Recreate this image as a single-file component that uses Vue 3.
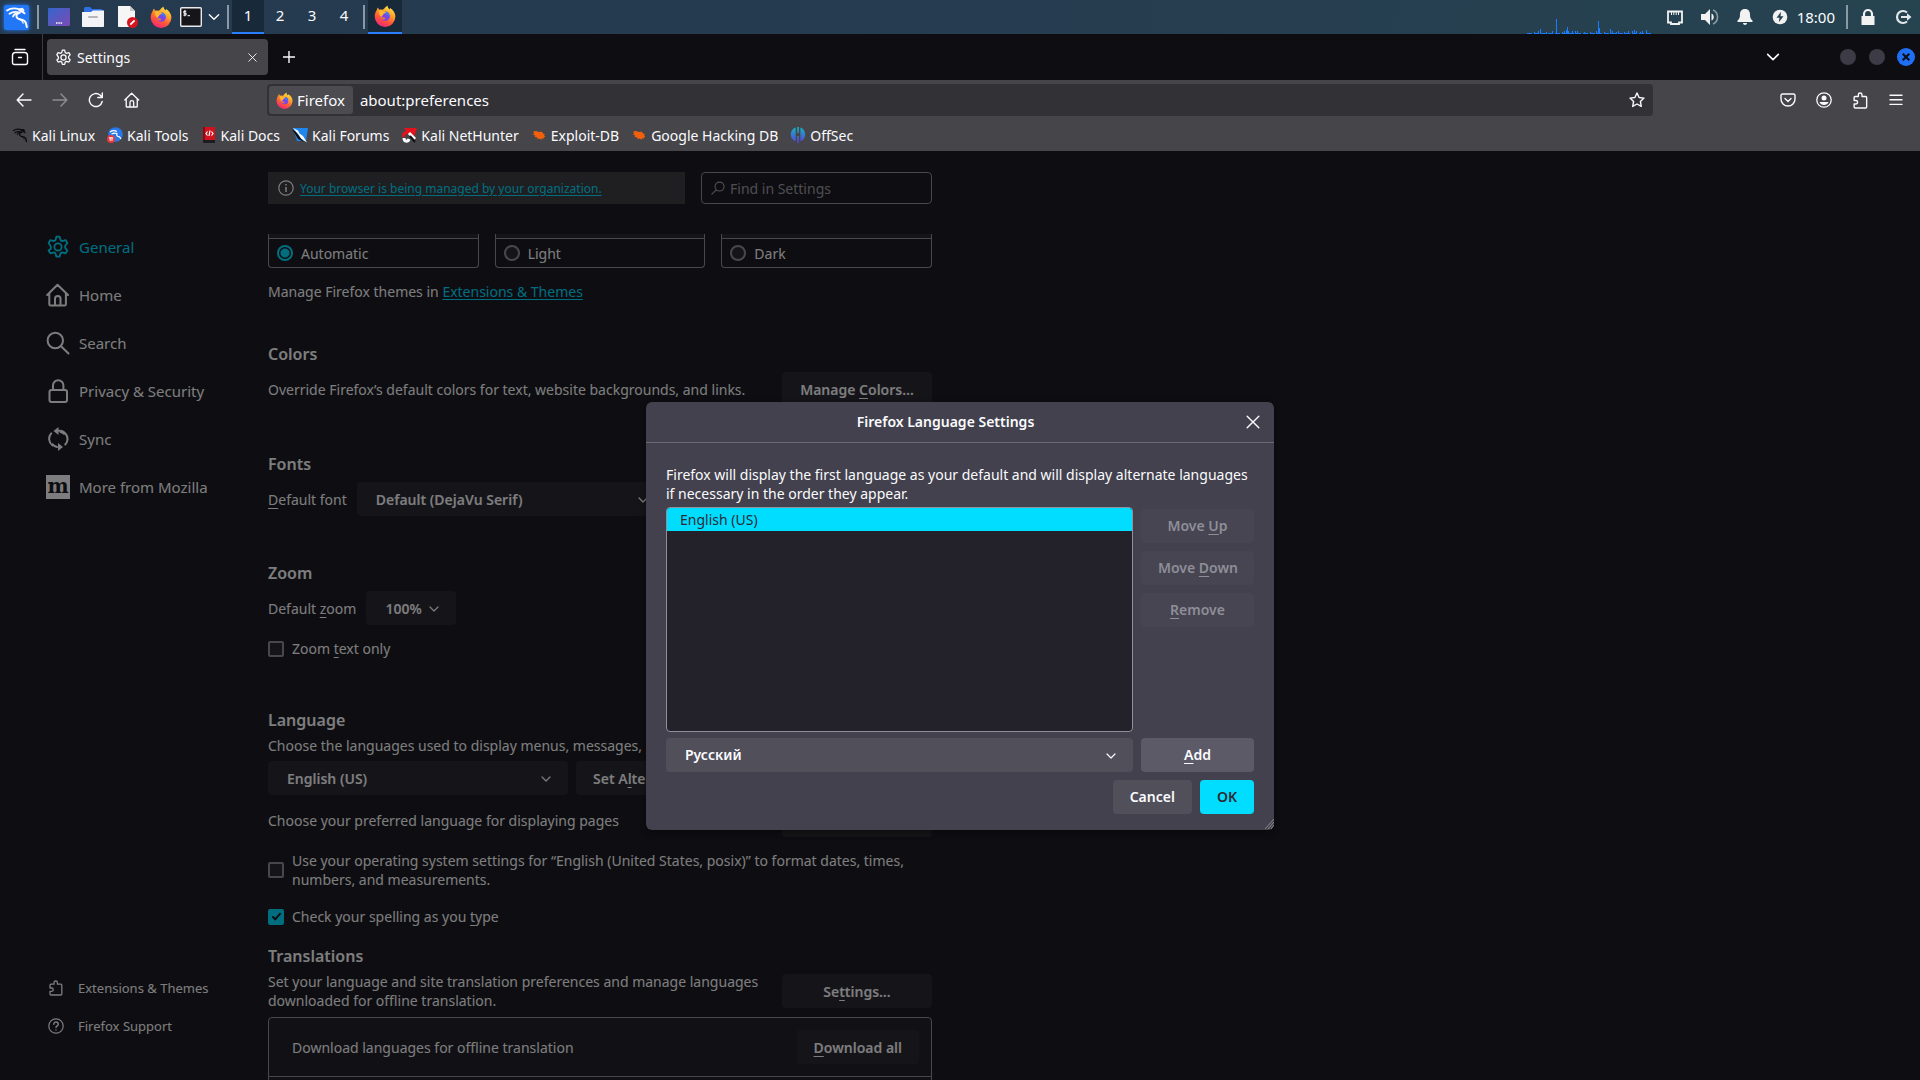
<template>
  <div class="desktop">
    <!-- Shared icon shapes -->
    <svg class="defs" aria-hidden="true">
      <defs>
        <linearGradient id="fx-body" x1="0.8" y1="0" x2="0.3" y2="1">
          <stop offset="0" stop-color="#fff04a" />
          <stop offset="0.35" stop-color="#ffa52b" />
          <stop offset="0.65" stop-color="#ff5a36" />
          <stop offset="1" stop-color="#f0237c" />
        </linearGradient>
        <linearGradient id="desk-bg" x1="0" y1="0" x2="1" y2="1">
          <stop offset="0" stop-color="#3465cc" />
          <stop offset="1" stop-color="#7b4bb4" />
        </linearGradient>
        <linearGradient id="offsec-bg" x1="0" y1="0" x2="0" y2="1">
          <stop offset="0" stop-color="#12b5c0" />
          <stop offset="1" stop-color="#5a3fd8" />
        </linearGradient>
      </defs>
      <symbol id="firefox" viewBox="0 0 22 22">
        <path fill="url(#fx-body)" d="M2.6 5.2C3 4 3.5 3.200 4.100 2.600c.2 1 .6 1.600 1.100 2.100 1-.3 2-.3 2.800 0C10 5 10.600 2.500 13.500.6c0 1.700.8 2.700 2 3.800l.6-1.500c3.500 2.200 5.300 5.300 5.300 8.700a10.300 10.300 0 0 1-20.700 0c0-2.500.7-4.600 1.900-6.400z" />
        <circle cx="11.300" cy="11.200" r="4.600" fill="#7a45e6" />
        <path fill="#3f7cf0" d="M9 7.200c2-1 4.500-.5 5.800 1 1 1.500 1 3 .3 4.300-.5-2.300-2-3.300-3.600-3.200z" />
        <path fill="#ffb52f" d="M5.200 5.300c1.600-.6 3.200-.2 4.200.9l2.600.5c-.2 1-1 1.500-2.200 1.900-.8 1.900-2 2.200-2.200 3.900-2.100-2-3.200-4.500-2.400-7.200z" />
        <path fill="#ff7139" d="M7.300 11.400c1 1.100 2.800.8 4.400 1.900-1.500 1.700-3.300 1.400-4.300.4z" />
      </symbol>
      <symbol id="dragon" viewBox="0 0 24 24">
        <g fill="none" stroke="currentColor" stroke-linecap="round">
          <path stroke-width="1.800" d="M2 5.500c4-2.800 8-2.700 12.500-1.200M4.500 8.800c3-2 6.500-2.500 10.500-1M8 11.500c.6-2 3-3.500 5.500-3.200" />
          <path stroke-width="2" d="M14 4.500c1.500 1.800 3.500 2 5.500 3.800M15.300 4.200l2-.3 1.200 1.600" />
          <path stroke-width="2" d="M13.500 8c-2.500 1.200-3 4.200-.4 5.600 2.300 1.100 6 .8 7.300 3.400.9 1.800 1 3.400 1.400 5" />
          <path stroke-width="1.300" d="M14.500 14.500c2 .6 3.200 1.800 3.700 3.600" />
        </g>
      </symbol>
      <symbol id="gear" viewBox="0 0 24 24">
        <g fill="none" stroke="currentColor" stroke-width="1.800" stroke-linejoin="round">
          <circle cx="12" cy="12" r="3.600" />
          <path d="M10.400 1h3.200l.9 3.400 1.700 1 3.400-1 1.800 2.800-2.200 2.800v2.200l2.200 2.600-1.800 2.900-3.400-1-1.700 1-.9 3.300h-3.200l-.9-3.300-1.700-1-3.400 1-1.800-2.900L4.800 13v-2.200L2.600 7.200l1.800-2.800 3.400 1 1.700-1z" transform="translate(0 .7)" />
        </g>
      </symbol>
      <symbol id="home" viewBox="0 0 24 24">
        <path fill="none" stroke="currentColor" stroke-width="2" stroke-linecap="round" stroke-linejoin="round" d="M1.200 12 11.500 1.800 22 12M3.300 10.200v11c0 .9.600 1.300 1.300 1.300h14c.8 0 1.300-.5 1.300-1.300v-11M9 22v-6.500c0-3.500 5.500-3.500 5.500 0V22" />
      </symbol>
      <symbol id="search" viewBox="0 0 24 24">
        <path fill="none" stroke="currentColor" stroke-width="2" stroke-linecap="round" d="M17 9.500a7.700 7.700 0 1 1-15.400 0 7.700 7.700 0 0 1 15.400 0zM15 15.200l7.500 7.300" />
      </symbol>
      <symbol id="lock" viewBox="0 0 24 24">
        <g fill="none" stroke="currentColor" stroke-width="2">
          <rect x="3.500" y="11" width="17.500" height="12" rx="2" />
          <path d="M7 11V6.500a5.200 5.200 0 0 1 10.400 0V11" />
        </g>
      </symbol>
      <symbol id="sync" viewBox="0 0 24 24">
        <path fill="none" stroke="currentColor" stroke-width="2" stroke-linecap="round" d="M6.500 18.500A8.300 8.300 0 0 1 5.200 6.400M12.500 3.700a8.300 8.300 0 0 1 6.800 13.800M14.500 5a8.200 8.200 0 0 1 3.500 1.800M6.300 17.200A8 8 0 0 0 11 20" />
        <path fill="currentColor" d="M12.500 0v8L7.500 4zM12 24v-8l5 4z" />
      </symbol>
      <symbol id="puzzle" viewBox="0 0 16 16">
        <path fill="none" stroke="currentColor" stroke-width="1.300" stroke-linejoin="round" d="M2 5.200c0-.7.300-1 1-1h3V2.700a1.700 1.700 0 0 1 3.400 0v1.500h3.400c.7 0 1 .4 1 1V14c0 .7-.3 1-1 1H3c-.7 0-1-.3-1-1v-2.700h1.600a1.600 1.600 0 0 0 0-3.300H2z" />
      </symbol>
      <symbol id="help" viewBox="0 0 16 16">
        <circle cx="8" cy="8" r="7.200" fill="none" stroke="currentColor" stroke-width="1.200" />
        <path fill="none" stroke="currentColor" stroke-width="1.400" stroke-linecap="round" d="M5.800 6.200c0-3 4.500-2.800 4.500 0C10.300 7.800 8 7.900 8 9.500M8 12v.1" />
      </symbol>
      <symbol id="chevron" viewBox="0 0 12 12">
        <path fill="none" stroke="currentColor" stroke-width="1.200" stroke-linecap="round" stroke-linejoin="round" d="m2 4 4 4 4-4" />
      </symbol>
      <symbol id="cross" viewBox="0 0 12 12">
        <path fill="none" stroke="currentColor" stroke-width="1.200" stroke-linecap="round" d="m1 1 10 10M11 1 1 11" />
      </symbol>
      <symbol id="bug" viewBox="0 0 16 16">
        <path fill="#f2600c" d="M2 4.500 5 4l3 1 3-.2 1 1.600 2.200 1-1.200.8 1.500 1.800-1.800.3.600 1.500-2.100-.6-1 1.600-1.500-1.200-2 .7-.3-1.700L3.500 10l.8-1.300L1.500 7l1.900-.5z" />
      </symbol>
    </svg>

    <!-- Desktop panel -->
    <header class="panel">
      <button class="kali-menu" aria-label="Applications">
        <svg width="24" height="24"><use href="#dragon" /></svg>
      </button>
      <i class="panel-sep"></i>
      <div class="launchers">
        <button aria-label="Show desktop">
          <svg width="22" height="22" viewBox="0 0 22 22">
            <rect y="2" width="22" height="18" rx="1" fill="url(#desk-bg)" />
            <path stroke="#fff" stroke-width="1.500" d="M8 17h1.500M10.300 17h1.500M12.600 17h1.500" />
          </svg>
        </button>
        <button aria-label="File manager">
          <svg width="22" height="22" viewBox="0 0 22 22">
            <path fill="#2f6fe4" d="M2 3c0-1 .5-2 1.500-2H8l2 2h9c1 0 1.500.6 1.500 1.500V9H2z" />
            <path fill="#f4f4f6" d="M0 6h9l2-1.500h11V20c0 .6-.4 1-1 1H1c-.6 0-1-.4-1-1z" />
            <path stroke="#b6b6bb" stroke-width="2" stroke-linecap="round" d="M7 11h8" />
          </svg>
        </button>
        <button aria-label="Text editor">
          <svg width="22" height="22" viewBox="0 0 22 22">
            <path fill="#f6f6f7" d="M2 0h12l5 5v16H3c-.6 0-1-.4-1-1z" />
            <path fill="#c8c8cc" d="M14 0v5h5z" />
            <circle cx="16.500" cy="16.500" r="5.500" fill="#d7141e" />
            <path stroke="#fff" stroke-width="1.800" d="m14.300 18.600 4.300-4.300" />
          </svg>
        </button>
        <button aria-label="Firefox"><svg width="22" height="22"><use href="#firefox" /></svg></button>
        <button aria-label="Terminal">
          <svg class="terminal" width="22" height="22" viewBox="0 0 22 22">
            <rect x=".7" y="1.700" width="20.600" height="18.600" rx="1" fill="#16151a" stroke="#e9e9ec" stroke-width="1.400" />
            <path fill="none" stroke="#fff" stroke-width="1" d="M6.300 5.300H3.800v1.900h2.300v1.900H3.400M4.900 4v6.300M7.500 9.700H10" />
          </svg>
        </button>
        <button class="more" aria-label="More terminals"><svg width="14" height="14"><use href="#chevron" /></svg></button>
      </div>
      <i class="panel-sep"></i>
      <nav class="workspaces">
        <button v-for="n in 4" :key="n" :class="{ active: n === workspace }" @click="workspace = n">{{ n }}</button>
      </nav>
      <i class="panel-sep"></i>
      <button class="task active" aria-label="Firefox window"><svg width="22" height="22"><use href="#firefox" /></svg></button>

      <div class="tray">
        <svg class="graph" width="128" height="16" viewBox="0 0 128 16">
          <path
            v-for="(bar, i) in load"
            :key="i"
            :d="`M${bar[0]}.5 16v-${bar[1]}`"
            stroke="#1c7cff"
          />
          <path stroke="#1c7cff" stroke-dasharray="5 2" d="M1 15.500h126" />
        </svg>
        <svg width="18" height="18" viewBox="0 0 18 18">
          <path fill="none" stroke="#f2f2f2" stroke-width="1.800" d="M2 3.500h14v11h-3V16H5v-1.500H2z" />
          <path stroke="#f2f2f2" d="M5.500 4v3M7.800 4v3M10.200 4v3M12.500 4v3" />
        </svg>
        <svg width="18" height="18" viewBox="0 0 18 18">
          <path fill="#f2f2f2" d="M0 6h4l5-5v16l-5-5H0z" />
          <path fill="#f2f2f2" d="M10.500 5.500c3 1 3 6 0 7z" />
          <path fill="none" stroke="#8a9aa3" stroke-width="1.600" d="M12 2c6 2.500 6 11.500 0 14" />
        </svg>
        <svg width="18" height="18" viewBox="0 0 18 18">
          <path fill="#f2f2f2" d="M9 1c3.800 0 5 2.500 5 5.500 0 3.300.8 4.600 2.500 6V14h-15v-1.500c1.700-1.400 2.500-2.700 2.500-6C4 3.500 5.200 1 9 1zM7 15h4c0 2.500-4 2.500-4 0z" />
        </svg>
        <svg width="18" height="18" viewBox="0 0 18 18">
          <circle cx="9" cy="9" r="7.300" fill="#f2f2f2" />
          <path fill="#243f50" d="m10 3.800-4.500 6h3l-.7 4.500 4.700-6h-3z" />
        </svg>
        <time>18:00</time>
        <i class="panel-sep"></i>
        <svg width="18" height="18" viewBox="0 0 18 18">
          <path fill="#f2f2f2" d="M2.500 8h13v9h-13z" />
          <path fill="none" stroke="#f2f2f2" stroke-width="2.200" d="M5 9V6a4 4 0 0 1 8 0v3" />
        </svg>
        <svg width="18" height="18" viewBox="0 0 18 18">
          <path fill="none" stroke="#e4e8ea" stroke-width="2.200" d="M13 4.500a6 6 0 1 0 0 9" />
          <path fill="#e4e8ea" d="M7 8h6V5.200L17.500 9 13 12.800V10H7z" />
        </svg>
      </div>
    </header>

    <!-- Tab strip -->
    <div class="tabs">
      <button class="icon-btn view" aria-label="Firefox View">
        <svg width="18" height="18" viewBox="0 0 18 18" fill="none" stroke="currentColor" stroke-width="1.400" stroke-linecap="round">
          <path d="M4 1.500h10" />
          <path d="M1.500 7.500c0-2 1-3 3-3h9c2 0 3 1 3 3v7c0 1.300-.7 2-2 2h-11c-1.300 0-2-.7-2-2z" />
          <path d="M7.500 9.500h3" />
        </svg>
      </button>
      <div class="tab">
        <svg width="17" height="17"><use href="#gear" /></svg>
        <span>Settings</span>
        <button class="tab-close" aria-label="Close tab"><svg width="9" height="9"><use href="#cross" /></svg></button>
      </div>
      <button class="icon-btn" aria-label="New tab">
        <svg width="14" height="14" viewBox="0 0 14 14" stroke="currentColor" stroke-width="1.400"><path d="M7 1v12M1 7h12" /></svg>
      </button>
      <div class="window-controls">
        <button class="icon-btn list" aria-label="List all tabs"><svg width="16" height="16"><use href="#chevron" /></svg></button>
        <button class="dot" aria-label="Minimize"></button>
        <button class="dot" aria-label="Maximize"></button>
        <button class="dot close" aria-label="Close"><svg width="8" height="8" viewBox="0 0 8 8" stroke="currentColor" stroke-width="2"><path d="m.7.700 6.600 6.600M7.300.7.700 7.300" /></svg></button>
      </div>
    </div>

    <!-- Navigation bar -->
    <div class="navbar">
      <div class="nav-buttons">
        <button class="icon-btn" aria-label="Back">
          <svg width="16" height="16" viewBox="0 0 16 16" class="line"><path d="M15 8H1.500M7 2 1.200 8 7 14" /></svg>
        </button>
        <button class="icon-btn faded" aria-label="Forward">
          <svg width="16" height="16" viewBox="0 0 16 16" class="line"><path d="M1 8h13.500M9 2l5.800 6L9 14" /></svg>
        </button>
        <button class="icon-btn" aria-label="Reload">
          <svg width="16" height="16" viewBox="0 0 16 16" class="line"><path d="M14.200 9.500A6.500 6.500 0 1 1 12 3l2 2M14.300 1v4.500H9.800" /></svg>
        </button>
        <button class="icon-btn" aria-label="Home"><svg width="16" height="16"><use href="#home" /></svg></button>
      </div>
      <div class="urlbar">
        <button class="identity"><svg width="17" height="17"><use href="#firefox" /></svg>Firefox</button>
        <input v-model="url" type="text" aria-label="Address">
        <button class="icon-btn" aria-label="Bookmark this page">
          <svg width="16" height="16" viewBox="0 0 16 16" class="line"><path d="m8 1 2.100 4.500 4.900.6-3.600 3.400.9 4.900L8 12l-4.300 2.400.9-4.900L1 6.100l4.900-.6z" /></svg>
        </button>
      </div>
      <div class="nav-tools">
        <button class="icon-btn" aria-label="Pocket">
          <svg width="16" height="16" viewBox="0 0 16 16" class="line"><path d="M2.500 2h11c.8 0 1.500.6 1.500 1.500V7a7 7 0 0 1-14 0V3.500C1 2.600 1.700 2 2.500 2zM5 6.500l3 3 3-3" /></svg>
        </button>
        <button class="icon-btn" aria-label="Account">
          <svg width="16" height="16" viewBox="0 0 16 16"><circle cx="8" cy="8" r="7.200" fill="none" stroke="currentColor" stroke-width="1.300" /><circle cx="8" cy="6" r="2.500" fill="currentColor" /><path fill="currentColor" d="M3.500 10h9c-1 4-8 4-9 0z" /></svg>
        </button>
        <button class="icon-btn" aria-label="Extensions"><svg width="17" height="17"><use href="#puzzle" /></svg></button>
        <button class="icon-btn" aria-label="Menu">
          <svg width="16" height="16" viewBox="0 0 16 16" class="line"><path d="M2 3.200h12M2 7.800h12M2 12.400h12" /></svg>
        </button>
      </div>
    </div>

    <!-- Bookmarks -->
    <nav class="bookmarks">
      <a href="#"><svg class="dark" width="16" height="16"><use href="#dragon" /></svg>Kali Linux</a>
      <a href="#">
        <svg width="16" height="16" viewBox="0 0 16 16">
          <circle cx="8.500" cy="7.500" r="7.300" fill="#2878ea" />
          <path fill="none" stroke="#fff" stroke-width="1.200" d="M3 5c3-2 5-1.500 7-.5M4.500 7c2-1 4-1 5.500-.5-1 2 .5 3 2.500 3.300l1.500 2" />
          <circle cx="4" cy="12" r="4" fill="#e53939" />
          <path fill="none" stroke="#fff" d="M1.800 10.800h4.400M3.200 10.800v3M5 10.800v3" />
        </svg>Kali Tools
      </a>
      <a href="#">
        <svg width="16" height="16" viewBox="0 0 16 16">
          <path fill="#d0121f" d="M2 0h12v13H2z" />
          <path fill="#8a0a14" d="M2 0h2v13H2z" />
          <path fill="#1b1b20" d="M2 13h12v3H3c-.7 0-1-.4-1-1z" />
          <path fill="none" stroke="#fff" stroke-width="1.200" d="M6.500 4.500 5 6.500l1.500 2M10.500 4.500l1.500 2-1.500 2M9 3.500 8 9" />
        </svg>Kali Docs
      </a>
      <a href="#">
        <svg width="16" height="16" viewBox="0 0 16 16">
          <path fill="#1e86ee" d="M1 1h15l-2 13H5z" />
          <path fill="#111" d="m0 2 4 3 8 10-6-3z" />
          <path fill="#fff" d="m1 1 5 2.500 1.500 3L11 9l4 6.500-6-4-2.500-4z" />
        </svg>Kali Forums
      </a>
      <a href="#">
        <svg width="16" height="16" viewBox="0 0 16 16">
          <path fill="#e5121b" d="M3 1h13l-4 12z" />
          <path fill="none" stroke="#e5121b" stroke-width="3" d="M2 10c1-6 6-6 8-2" />
          <path fill="none" stroke="#fff" stroke-width="3" d="M3 11c0 4 4 4 5 1M8 6l6 6" />
          <path stroke="#111" stroke-width="2" d="m9 9 5 6" />
        </svg>Kali NetHunter
      </a>
      <a href="#"><svg width="16" height="16"><use href="#bug" /></svg>Exploit-DB</a>
      <a href="#"><svg width="16" height="16"><use href="#bug" /></svg>Google Hacking DB</a>
      <a href="#">
        <svg width="16" height="16" viewBox="0 0 16 16">
          <path fill="url(#offsec-bg)" d="M7.200 9h1.700v7H7.200zM7.200 0h1.700v6H7.200zM5.700.5v13.800C-1.700 12 .1 2 5.700.5zM10.400.5c5.600 1.500 7.400 11.500 0 13.800z" />
        </svg>OffSec
      </a>
    </nav>

    <!-- Preferences page -->
    <div class="page">
      <aside class="sidebar">
        <ul class="categories">
          <li v-for="item in categories" :key="item.label">
            <a href="#" :class="{ selected: item.icon === 'gear' }">
              <svg v-if="item.icon" width="24" height="24"><use :href="'#' + item.icon" /></svg>
              <span v-else class="moz" aria-hidden="true">m</span>
              {{ item.label }}
            </a>
          </li>
        </ul>
        <ul class="footer-links">
          <li><a href="#"><svg width="16" height="16"><use href="#puzzle" /></svg>Extensions &amp; Themes</a></li>
          <li><a href="#"><svg width="16" height="16"><use href="#help" /></svg>Firefox Support</a></li>
        </ul>
      </aside>

      <main class="content">
        <div class="sticky">
          <div class="policy">
            <svg width="16" height="16" viewBox="0 0 16 16"><circle cx="8" cy="8" r="7.200" fill="none" stroke="currentColor" stroke-width="1.200" /><path stroke="currentColor" stroke-width="1.500" d="M8 7v5M8 4v1.600" /></svg>
            <a href="#">Your browser is being managed by your organization.</a>
          </div>
          <label class="find">
            <svg width="14" height="14"><use href="#search" /></svg>
            <input type="search" placeholder="Find in Settings" aria-label="Find in Settings">
          </label>
        </div>

        <div class="scroll">
          <div class="themes">
            <label v-for="t in ['Automatic', 'Light', 'Dark']" :key="t" class="theme">
              <span class="preview"></span>
              <span class="theme-name"><input v-model="theme" type="radio" name="theme" :value="t">{{ t }}</span>
            </label>
          </div>
          <p class="themes-link">Manage Firefox themes in <a href="#">Extensions &amp; Themes</a></p>

          <section class="colors">
            <h2>Colors</h2>
            <div class="row">
              <span>Override Firefox’s default colors for text, website backgrounds, and links.</span>
              <button class="btn side">Manage <u>C</u>olors…</button>
            </div>
          </section>

          <section class="fonts">
            <h2>Fonts</h2>
            <div class="field">
              <label for="font"><u>D</u>efault font</label>
              <div class="select font-select">
                <select id="font"><option>Default (DejaVu Serif)</option></select>
                <svg width="12" height="12"><use href="#chevron" /></svg>
              </div>
            </div>
          </section>

          <section class="zoom">
            <h2>Zoom</h2>
            <div class="field">
              <label for="zoom">Default <u>z</u>oom</label>
              <div class="select zoom-select">
                <select id="zoom"><option>100%</option></select>
                <svg width="12" height="12"><use href="#chevron" /></svg>
              </div>
            </div>
            <label class="check"><input type="checkbox"><span>Zoom <u>t</u>ext only</span></label>
          </section>

          <section class="language">
            <h2>Language</h2>
            <label class="block" for="lang">Choose the languages used to display menus, messages, and notifications from Firefox.</label>
            <div class="lang-row">
              <div class="select lang-select">
                <select id="lang"><option>English (US)</option></select>
                <svg width="12" height="12"><use href="#chevron" /></svg>
              </div>
              <button class="btn">Set A<u>l</u>ternatives…</button>
            </div>
            <div class="row preferred">
              <span>Choose your preferred language for displaying pages</span>
              <button class="btn side">Ch<u>o</u>ose…</button>
            </div>
            <label class="check locale"><input type="checkbox"><span>Use your operating system settings for “English (United States, posix)” to format dates, times, numbers, and measurements.</span></label>
            <label class="check"><input type="checkbox" checked><span>Check your spelling as you <u>t</u>ype</span></label>
          </section>

          <section class="translations">
            <h2>Translations</h2>
            <div class="row">
              <span class="wrap">Set your language and site translation preferences and manage languages downloaded for offline translation.</span>
              <button class="btn side">Se<u>t</u>tings…</button>
            </div>
            <div class="download-list">
              <div class="download-head">
                <span>Download languages for offline translation</span>
                <button class="btn"><u>D</u>ownload all</button>
              </div>
              <div class="download-body"></div>
            </div>
          </section>
        </div>
      </main>

      <!-- Language dialog -->
      <div class="overlay">
        <div class="dialog" role="dialog" aria-labelledby="dialog-title">
          <div class="dialog-head">
            <h1 id="dialog-title">Firefox Language Settings</h1>
            <button class="dialog-close" aria-label="Close"><svg width="14" height="14"><use href="#cross" /></svg></button>
          </div>
          <div class="dialog-body">
            <p>Firefox will display the first language as your default and will display alternate languages if necessary in the order they appear.</p>
            <div class="dialog-grid">
              <ul class="lang-list" role="listbox">
                <li role="option" aria-selected="true">English (US)</li>
              </ul>
              <div class="order-buttons">
                <button class="btn" disabled>Move <u>U</u>p</button>
                <button class="btn" disabled>Move <u>D</u>own</button>
                <button class="btn" disabled><u>R</u>emove</button>
              </div>
              <div class="select">
                <select v-model="toAdd" aria-label="Language to add"><option>Русский</option></select>
                <svg width="12" height="12"><use href="#chevron" /></svg>
              </div>
              <button class="btn hover"><u>A</u>dd</button>
            </div>
            <div class="dialog-actions">
              <button class="btn">Cancel</button>
              <button class="btn primary">OK</button>
            </div>
          </div>
          <svg class="resizer" width="10" height="12" viewBox="0 0 10 12"><path stroke="#a0a0a8" stroke-width=".8" d="m1 11 9-10M4 11l6-7M7 11l3-4" /></svg>
        </div>
      </div>
    </div>
  </div>
</template>

<script setup>
import { ref } from 'vue'

const workspace = ref(1)
const url = ref('about:preferences')
const theme = ref('Automatic')
const toAdd = ref('Русский')

const categories = [
  { icon: 'gear', label: 'General' },
  { icon: 'home', label: 'Home' },
  { icon: 'search', label: 'Search' },
  { icon: 'lock', label: 'Privacy & Security' },
  { icon: 'sync', label: 'Sync' },
  { icon: null, label: 'More from Mozilla' }
]

// CPU graph: x position and height of each spike
const load = [
  [8, 2], [12, 3], [14, 5], [20, 2], [26, 3], [30, 15], [36, 2], [38, 3], [40, 4], [41, 7], [42, 3],
  [46, 3], [49, 3], [51, 3], [58, 2], [64, 2], [70, 3], [72, 13], [73, 6], [78, 2], [84, 5], [86, 3],
  [90, 2], [92, 3], [98, 2], [102, 3], [106, 3], [108, 4], [110, 3], [114, 2], [116, 3], [120, 4]
]
</script>

<style>
body {
  background: #1c1b22;
}
</style>

<style scoped>
.desktop {
  display: flex;
  flex-direction: column;
  height: 100vh;
  overflow: hidden;
  font: 14px/19px "Noto Sans", sans-serif;
  color: #fbfbfe;
}

.desktop *,
.desktop *::before {
  box-sizing: border-box;
}

.defs {
  position: absolute;
  width: 0;
  height: 0;
}

svg {
  flex: none;
}

button,
input,
select {
  font: inherit;
  color: inherit;
  margin: 0;
  padding: 0;
  border: 0;
  background: none;
}

ul {
  list-style: none;
  margin: 0;
  padding: 0;
}

h1,
h2,
p {
  margin: 0;
}

a {
  color: inherit;
  text-decoration: none;
}

u {
  text-underline-offset: 3px;
  text-decoration-thickness: 1px;
}

.line {
  fill: none;
  stroke: currentColor;
  stroke-width: 1.4;
  stroke-linecap: round;
  stroke-linejoin: round;
}

/* Desktop panel */
.panel {
  display: flex;
  align-items: center;
  flex: none;
  height: 34px;
  padding: 0 8px 0 4px;
  background: linear-gradient(100deg, #253a4e, #263c50 50%, #264350);
  font-size: 15px;
}

.panel button {
  display: flex;
  align-items: center;
  justify-content: center;
}

.kali-menu {
  width: 25px;
  height: 25px;
  margin-right: 8px;
  background: #2177f5;
  border-radius: 2px;
  box-shadow: 0 0 4px #2177f5;
}

.panel-sep {
  width: 2px;
  height: 24px;
  background: #8b99a3;
}

.launchers {
  display: flex;
  gap: 12px;
  padding: 0 6px 0 9px;
}

.launchers .terminal {
  margin-left: -4px;
}

.launchers .more {
  width: 14px;
  margin-left: -7px;
}

.workspaces {
  display: flex;
  height: 100%;
  padding: 0 3px;
}

.workspaces button {
  width: 32px;
  padding-bottom: 2px;
  border-bottom: 2px solid transparent;
}

.panel .active {
  background: #18293a;
  border-bottom: 2px solid #2b7fff;
}

.task {
  width: 34px;
  height: 100%;
  margin-left: 3px;
}

.tray {
  display: flex;
  align-items: center;
  gap: 17px;
  height: 100%;
  margin-left: auto;
}

.tray .graph {
  align-self: flex-end;
  margin-right: -5px;
}

.tray time {
  margin: 0 -6px 0 -9px;
}

.tray .panel-sep {
  margin-right: -6px;
}

/* Tab strip */
.tabs {
  display: flex;
  align-items: center;
  flex: none;
  height: 46px;
  background: #0d0d12;
}

.icon-btn {
  display: flex;
  align-items: center;
  justify-content: center;
  width: 36px;
  height: 32px;
}

.view {
  width: 43px;
  height: 100%;
  padding-right: 2px;
  border-right: 1px solid #3a3a40;
}

.tab {
  display: flex;
  align-items: center;
  gap: 5px;
  width: 221px;
  height: 36px;
  margin: 0 3px 0 4px;
  padding: 0 7px 0 8px;
  background: #45454a;
  border-radius: 4px;
}

.tab-close {
  display: flex;
  align-items: center;
  justify-content: center;
  width: 18px;
  height: 18px;
  margin-left: auto;
}

.window-controls {
  display: flex;
  align-items: center;
  gap: 13px;
  margin-left: auto;
  padding-right: 5px;
}

.window-controls .list {
  margin-right: 36px;
}

.dot {
  width: 16px;
  height: 16px;
  border-radius: 50%;
  background: #3c3b46;
}

.dot.close {
  display: flex;
  align-items: center;
  justify-content: center;
  width: 18px;
  height: 18px;
  margin-left: -1px;
  background: #1f6ff5;
  color: #0d0d12;
}

/* Navigation bar */
.navbar {
  display: flex;
  align-items: center;
  justify-content: space-between;
  flex: none;
  height: 40px;
  padding: 0 6px;
  background: #45454a;
}

.nav-buttons,
.nav-tools {
  display: flex;
  width: 144px;
}

.faded {
  opacity: 0.4;
}

.urlbar {
  display: flex;
  align-items: center;
  flex: 1;
  height: 32px;
  margin: 0 117px;
  padding: 0 2px;
  background: #313136;
  border-radius: 4px;
  font-size: 15px;
}

.urlbar input {
  flex: 1;
  min-width: 0;
  height: 28px;
  outline: 0;
}

.urlbar .icon-btn {
  width: 28px;
}

.identity {
  display: flex;
  align-items: center;
  gap: 4px;
  height: 28px;
  margin-right: 7px;
  padding: 0 8px 0 7px;
  background: #4b4b50;
  border-radius: 3px;
}

.bookmarks {
  display: flex;
  gap: 12px;
  flex: none;
  height: 31px;
  padding: 5px 12px 0;
  background: #45454a;
}

.bookmarks a {
  display: flex;
  align-items: center;
  gap: 4px;
  height: 20px;
}

.bookmarks .dark {
  color: #0c0c0f;
}

/* Preferences page */
.page {
  position: relative;
  display: flex;
  flex: 1;
  min-height: 0;
  background: #1c1b22;
  overflow: hidden;
}

.sidebar {
  display: flex;
  flex-direction: column;
  justify-content: space-between;
  width: 268px;
  padding: 72px 0 35px 46px;
}

.categories a {
  display: flex;
  align-items: center;
  gap: 9px;
  height: 48px;
  font-size: 15px;
}

.categories .selected {
  color: #00ddff;
}

.moz {
  width: 24px;
  height: 24px;
  background: #fbfbfe;
  color: #1c1b22;
  font: 700 20px/22px "DejaVu Serif", serif;
  text-align: center;
}

.footer-links a {
  display: flex;
  align-items: center;
  gap: 14px;
  height: 38px;
  padding-left: 2px;
  font-size: 13px;
}

.content {
  display: flex;
  flex-direction: column;
  width: 664px;
}

.content a {
  color: #00ddff;
  text-decoration: underline;
  text-underline-offset: 2px;
}

.sticky {
  display: flex;
  gap: 16px;
  flex: none;
  height: 83px;
  padding-top: 21px;
}

.policy {
  display: flex;
  align-items: center;
  gap: 6px;
  flex: 1;
  height: 32px;
  padding-left: 10px;
  background: #3e3e42;
  font-size: 12px;
}

.find {
  display: flex;
  align-items: center;
  gap: 5px;
  width: 231px;
  height: 32px;
  padding: 0 9px;
  border: 1px solid #8f8f9d;
  border-radius: 4px;
  color: #9d9da4;
}

.find svg {
  transform: scaleX(-1);
}

.find input {
  flex: 1;
  min-width: 0;
  outline: 0;
}

.find input::placeholder {
  color: #9d9da4;
  opacity: 1;
}

.scroll {
  flex: 1;
  min-height: 0;
  overflow: hidden;
}

.themes {
  display: grid;
  grid-template-columns: repeat(3, 1fr);
  gap: 16px;
}

.theme {
  border: 1px solid #8f8f9d;
  border-top: 0;
  border-radius: 0 0 4px 4px;
}

.preview {
  display: block;
  height: 5px;
  background: #2b2a33;
  border-bottom: 1px solid #8f8f9d;
}

.theme-name {
  display: flex;
  align-items: center;
  gap: 8px;
  height: 28px;
  padding-left: 8px;
}

input[type="radio"] {
  appearance: none;
  width: 16px;
  height: 16px;
  border: 2px solid #8f8f9d;
  border-radius: 50%;
  background: #2b2a33;
}

input[type="radio"]:checked {
  border-color: #00ddff;
  background: radial-gradient(circle, #00ddff 4px, #1c1b22 5px);
}

.themes-link {
  margin-top: 14px;
}

h2 {
  font-size: 16px;
  line-height: 22px;
  font-weight: 600;
}

.row {
  display: flex;
  align-items: center;
  justify-content: space-between;
  min-height: 34px;
}

.field {
  display: flex;
  align-items: center;
  gap: 10px;
}

.btn {
  height: 34px;
  padding: 0 17px;
  background: #2b2a33;
  border-radius: 4px;
  font-weight: 600;
  white-space: nowrap;
}

.btn.side {
  width: 150px;
}

.select {
  position: relative;
  display: flex;
}

.select select {
  appearance: none;
  width: 100%;
  height: 34px;
  padding: 0 36px 0 19px;
  background: #2b2a33;
  border-radius: 4px;
  font-weight: 600;
}

.select svg {
  position: absolute;
  right: 16px;
  top: 12px;
  pointer-events: none;
}

.check {
  display: flex;
  align-items: center;
  gap: 8px;
}

input[type="checkbox"] {
  appearance: none;
  flex: none;
  width: 16px;
  height: 16px;
  border: 2px solid #8f8f9d;
  border-radius: 2px;
  background: #2b2a33;
}

input[type="checkbox"]:checked {
  position: relative;
  border-color: #00ddff;
  background: #00ddff;
}

input[type="checkbox"]:checked::before {
  content: "";
  position: absolute;
  left: 4px;
  top: 0;
  width: 5px;
  height: 9px;
  border: solid #1c1b22;
  border-width: 0 2px 2px 0;
  transform: rotate(42deg);
}

.colors {
  margin-top: 42px;
}

.colors .row {
  margin-top: 7px;
}

.fonts {
  margin-top: 47px;
}

.fonts .field,
.zoom .field {
  margin-top: 7px;
}

.font-select {
  width: 308px;
}

.zoom {
  margin-top: 46px;
}

.zoom-select {
  width: 90px;
}

.zoom-select select {
  padding-right: 16px;
}

.zoom .check {
  margin-top: 14px;
}

.language {
  margin-top: 51px;
}

.language .block {
  display: block;
  margin: 5px 0 6px;
  white-space: nowrap;
}

.lang-row {
  display: flex;
  gap: 8px;
}

.lang-select {
  width: 300px;
}

.preferred {
  margin-top: 8px;
}

.locale {
  margin: 14px 0 18px;
}

.translations {
  margin-top: 19px;
}

.translations .row {
  margin-top: 5px;
  min-height: 38px;
}

.translations .wrap {
  width: 500px;
}

.download-list {
  height: 200px;
  margin-top: 7px;
  border: 1px solid #8f8f9d;
  border-radius: 4px;
  background: #23222b;
}

.download-head {
  display: flex;
  align-items: center;
  justify-content: space-between;
  height: 59px;
  padding: 0 12px 0 23px;
  border-bottom: 1px solid #8f8f9d;
}

/* Language dialog */
.overlay {
  position: absolute;
  inset: 0;
  display: flex;
  align-items: center;
  justify-content: center;
  background: rgba(0, 0, 0, 0.5);
}

.dialog {
  position: relative;
  width: 628px;
  background: #42414d;
  border-radius: 6px;
  box-shadow: 0 2px 6px rgba(0, 0, 0, 0.4);
}

.dialog-head {
  display: flex;
  align-items: center;
  height: 41px;
  padding-right: 13px;
  border-bottom: 1px solid #69696f;
}

.dialog-head h1 {
  flex: 1;
  font-size: 14px;
  line-height: 19px;
  font-weight: 600;
  text-align: center;
}

.dialog-close {
  display: flex;
  align-items: center;
  justify-content: center;
  width: 16px;
  height: 16px;
}

.dialog-body {
  padding: 22px 20px 16px;
}

.dialog-grid {
  display: grid;
  grid-template-columns: 1fr 113px;
  gap: 6px 8px;
  margin-top: 4px;
}

.lang-list {
  height: 225px;
  background: #23222b;
  border: 1px solid #8f8f9d;
  border-radius: 4px;
  overflow: hidden;
}

.lang-list li {
  height: 23px;
  padding-left: 13px;
  line-height: 23px;
  background: #00ddff;
  color: #2b2a33;
}

.order-buttons {
  display: flex;
  flex-direction: column;
  gap: 8px;
  padding-top: 2px;
}

.dialog .btn,
.dialog select {
  background: #504f5a;
}

.dialog .btn:disabled {
  background: #464551;
  color: #8f8e98;
}

.dialog .btn.hover {
  background: #5b5a66;
}

.dialog .btn.primary {
  background: #00ddff;
  color: #2b2a33;
}

.dialog-actions {
  display: flex;
  justify-content: flex-end;
  gap: 8px;
  margin-top: 8px;
}

.resizer {
  position: absolute;
  right: 0;
  bottom: 0;
}
</style>
